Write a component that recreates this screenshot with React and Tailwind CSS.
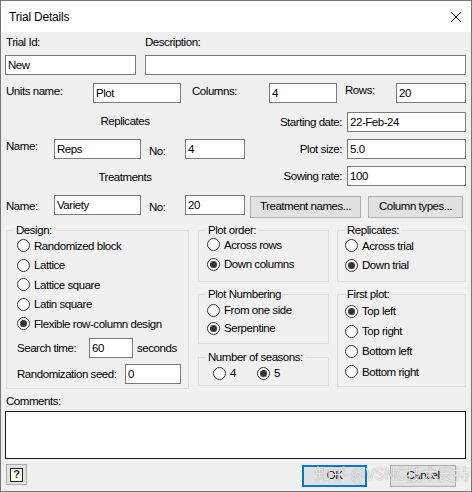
import React from "react";

const font = { fontFamily: '"Liberation Sans", Arial, sans-serif' };

function TextBox({ value = "", className = "" }) {
  return (
    <div
      className={
        "h-[20px] bg-white border border-[#7a7a7a] pl-[2px] leading-[18px] whitespace-nowrap overflow-hidden " +
        className
      }
    >
      {value}
    </div>
  );
}

function Radio({ label, checked, className = "" }) {
  return (
    <div className={"flex items-center gap-[4px] " + className}>
      <span className="w-[13px] h-[13px] rounded-full border border-[#333] bg-white flex items-center justify-center shrink-0">
        {checked ? <span className="w-[7px] h-[7px] rounded-full bg-[#333]" /> : null}
      </span>
      <span className="leading-[14px] whitespace-nowrap">{label}</span>
    </div>
  );
}

function Group({ title, className = "", children }) {
  return (
    <fieldset className={"min-w-0 border border-[#dcdcdc] pl-[10px] pr-[2px] " + className}>
      <legend className="ml-[-3px] px-[2px] leading-[14px]">{title}</legend>
      {children}
    </fieldset>
  );
}

function Button({ children, className = "" }) {
  return (
    <div
      className={
        "h-[22px] bg-[#e1e1e1] border border-[#adadad] flex items-center justify-center whitespace-nowrap shrink-0 " +
        className
      }
    >
      {children}
    </div>
  );
}

export default function App() {
  return (
    <div
      style={font}
      className="relative w-[472px] h-[492px] border border-[#767676] bg-[#f0f0f0] text-[11.5px] tracking-[-0.45px] text-black flex flex-col overflow-hidden"
    >
      {/* title bar */}
      <div className="h-[31px] bg-white flex items-center justify-between pl-[8px] pr-[8px] shrink-0">
        <span className="text-[12px] tracking-[-0.2px]">Trial Details</span>
        <svg width="12" height="12" viewBox="0 0 12 12" className="mr-[1px]">
          <path d="M1 1 L11 11 M11 1 L1 11" stroke="#000" strokeWidth="1" />
        </svg>
      </div>

      <div className="pl-[4px] pr-[5px] flex flex-col">
        {/* trial id / description */}
        <div className="mt-[3px] flex h-[14px] leading-[14px]">
          <span className="pl-[1px] w-[140px]">Trial Id:</span>
          <span>Description:</span>
        </div>
        <div className="mt-[6px] flex gap-[9px]">
          <TextBox value="New" className="w-[131px]" />
          <TextBox className="flex-1" />
        </div>

        {/* units / columns / rows */}
        <div className="mt-[8px] flex items-start">
          <span className="pl-[1px] mt-[1px] w-[88px] leading-[14px]">Units name:</span>
          <TextBox value="Plot" className="w-[88px]" />
          <span className="ml-[11px] mt-[1px] w-[77px] leading-[14px]">Columns:</span>
          <TextBox value="4" className="w-[68px]" />
          <span className="ml-[8px] w-[51px] leading-[14px]">Rows:</span>
          <TextBox value="20" className="flex-1" />
        </div>

        {/* replicates / treatments block */}
        <div className="mt-[9px] flex">
          <div className="w-[240px] flex flex-col">
            <div className="h-[20px] leading-[14px] text-center pt-[2px]">Replicates</div>
            <div className="mt-[7px] flex items-start">
              <span className="pl-[1px] w-[49px] leading-[14px]">Name:</span>
              <TextBox value="Reps" className="w-[87px]" />
              <span className="ml-[8px] mt-[5px] w-[36px] leading-[14px]">No:</span>
              <TextBox value="4" className="w-[60px]" />
            </div>
            <div className="mt-[7px] h-[20px] leading-[14px] text-center pt-[4px]">Treatments</div>
            <div className="mt-[9px] flex items-start">
              <span className="pl-[1px] mt-[4px] w-[49px] leading-[14px]">Name:</span>
              <TextBox value="Variety" className="w-[87px]" />
              <span className="ml-[8px] mt-[5px] w-[36px] leading-[14px]">No:</span>
              <TextBox value="20" className="w-[60px]" />
            </div>
          </div>
          <div className="flex-1 flex flex-col">
            <div className="flex items-center justify-end gap-[5px]">
              <span className="leading-[14px]">Starting date:</span>
              <TextBox value="22-Feb-24" className="w-[119px]" />
            </div>
            <div className="mt-[7px] flex items-center justify-end gap-[5px]">
              <span className="leading-[14px]">Plot size:</span>
              <TextBox value="5.0" className="w-[119px]" />
            </div>
            <div className="mt-[7px] flex items-center justify-end gap-[5px]">
              <span className="leading-[14px]">Sowing rate:</span>
              <TextBox value="100" className="w-[119px]" />
            </div>
            <div className="mt-[10px] flex gap-[7px] pl-[5px]">
              <Button className="w-[111px]">Treatment names...</Button>
              <Button className="w-[95px]">Column types...</Button>
            </div>
          </div>
        </div>

        {/* option groups */}
        <div className="mt-[5px] flex items-start">
          <Group title="Design:" className="ml-[1px] w-[183px] h-[166px] shrink-0">
            <div className="flex flex-col -mt-[1px]">
              <Radio label="Randomized block" className="h-[19.5px]" />
              <Radio label="Lattice" className="h-[19.5px]" />
              <Radio label="Lattice square" className="h-[19.5px]" />
              <Radio label="Latin square" className="h-[19.5px]" />
              <Radio label="Flexible row-column design" checked className="h-[19.5px]" />
              <div className="mt-[4px] flex items-center">
                <span className="w-[72px] leading-[14px]">Search time:</span>
                <TextBox value="60" className="w-[44px]" />
                <span className="ml-[4px] leading-[14px]">seconds</span>
              </div>
              <div className="mt-[6px] flex items-center">
                <span className="w-[108px] leading-[14px]">Randomization seed:</span>
                <TextBox value="0" className="w-[56px]" />
              </div>
            </div>
          </Group>

          <div className="ml-[9px] w-[131px] shrink-0 flex flex-col">
            <Group title="Plot order:" className="h-[59px]">
              <div className="flex flex-col -ml-[2px] -mt-[2px]">
                <Radio label="Across rows" className="h-[19px]" />
                <Radio label="Down columns" checked className="h-[20px]" />
              </div>
            </Group>
            <Group title="Plot Numbering" className="mt-[5px] h-[57px]">
              <div className="flex flex-col -ml-[2px]">
                <Radio label="From one side" className="h-[18px]" />
                <Radio label="Serpentine" checked className="h-[18px]" />
              </div>
            </Group>
            <Group title="Number of seasons:" className="mt-[6px] h-[36px]">
              <div className="flex items-center h-[16px] pl-[4px] mt-[1px]">
                <Radio label="4" className="w-[44px]" />
                <Radio label="5" checked />
              </div>
            </Group>
          </div>

          <div className="ml-[8px] flex-1 min-w-0 flex flex-col">
            <Group title="Replicates:" className="h-[59px]">
              <div className="flex flex-col -ml-[3px] -mt-[1px]">
                <Radio label="Across trial" className="h-[19px]" />
                <Radio label="Down trial" checked className="h-[20px]" />
              </div>
            </Group>
            <Group title="First plot:" className="mt-[5px] h-[100px]">
              <div className="flex flex-col -ml-[3px]">
                <Radio label="Top left" checked className="h-[20px]" />
                <Radio label="Top right" className="h-[20px]" />
                <Radio label="Bottom left" className="h-[20px]" />
                <Radio label="Bottom right" className="h-[21px]" />
              </div>
            </Group>
          </div>
        </div>

        {/* comments */}
        <div className="mt-[5px] pl-[1px] leading-[14px]">Comments:</div>
        <div className="mt-[3px] h-[48px] bg-white border border-[#1a1a1a]" />

        {/* bottom buttons */}
        <div className="mt-[5px] flex items-start">
          <div className="ml-[1px] w-[21px] h-[21px] bg-[#e1e1e1] border border-[#adadad] flex items-center justify-center">
            <div className="w-[13px] h-[14px] bg-[#ffffd8] border border-[#222] flex items-center justify-center text-[11px] font-bold leading-none text-[#1a1a80] tracking-normal">
              ?
            </div>
          </div>
          <div className="ml-auto mt-[1px] w-[65px] h-[22px] shrink-0 bg-[#e1e1e1] border-2 border-[#0078d7] flex items-center justify-center">
            OK
          </div>
          <Button className="ml-[23px] mt-[1px] w-[66px] mr-[10px]">Cancel</Button>
        </div>
      </div>

      {/* watermark overlay */}
      <div
        className="absolute left-[314px] top-[460px] text-[16px] tracking-[0px] text-white/80 whitespace-nowrap pointer-events-none"
        style={{
          fontFamily: '"Noto Sans CJK SC", "Liberation Sans", sans-serif',
          textShadow: "0 0 1px rgba(100,100,100,0.8)",
        }}
      >
        知乎 @VSNC技术支持
      </div>
    </div>
  );
}
